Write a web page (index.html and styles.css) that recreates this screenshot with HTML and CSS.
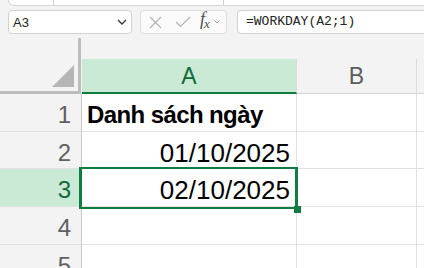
FILE: index.html
```html
<!DOCTYPE html>
<html>
  <head>
    <title>Excel - WORKDAY</title>
    <link rel="stylesheet" href="styles.css">
  </head>
  <body>
    <div class="ribbon">
      <span class="ribbon-sep sep-one"></span>
      <span class="ribbon-sep sep-two"></span>
    </div>

    <div class="formula-row">
      <div class="name-box">
        <span class="name-text">A3</span>
        <svg class="chevron" width="10" height="6" viewBox="0 0 10 6">
          <path d="M1 1 L5 5 L9 1" fill="none" stroke="#333" stroke-width="1.3"/>
        </svg>
      </div>
      <div class="fx-buttons">
        <svg class="btn-icon" width="13" height="13" viewBox="0 0 13 13">
          <path d="M1 1 L12 12 M12 1 L1 12" stroke="#b4b4b4" stroke-width="1.2"/>
        </svg>
        <svg class="btn-icon" width="16" height="12" viewBox="0 0 16 12">
          <path d="M1 6 L5.5 10.5 L15 1" fill="none" stroke="#b4b4b4" stroke-width="1.2"/>
        </svg>
        <span class="fx-label">f<sub>x</sub></span>
        <svg class="tiny-chevron" width="6" height="4" viewBox="0 0 6 4">
          <path d="M0.5 0.5 L3 3 L5.5 0.5" fill="none" stroke="#a0a0a0" stroke-width="1"/>
        </svg>
      </div>
      <div class="formula-bar">=WORKDAY(A2;1)</div>
    </div>

    <div class="sheet">
      <div class="corner"><span class="corner-tri"></span></div>
      <div class="col-head col-active">A</div>
      <div class="col-head">B</div>
      <div class="col-head col-rest"></div>

      <div class="row-head">1</div>
      <div class="cell cell-bold">Danh sách ngày</div>
      <div class="cell"></div>
      <div class="cell cell-rest"></div>

      <div class="row-head">2</div>
      <div class="cell cell-num">01/10/2025</div>
      <div class="cell"></div>
      <div class="cell cell-rest"></div>

      <div class="row-head row-active">3</div>
      <div class="cell cell-num">02/10/2025</div>
      <div class="cell"></div>
      <div class="cell cell-rest"></div>

      <div class="row-head">4</div>
      <div class="cell"></div>
      <div class="cell"></div>
      <div class="cell cell-rest"></div>

      <div class="row-head">5</div>
      <div class="cell"></div>
      <div class="cell"></div>
      <div class="cell cell-rest"></div>

      <div class="selection"></div>
      <div class="fill-handle"></div>
    </div>
  </body>
</html>
```

FILE: styles.css
```css
body {
  margin: 0;
  background-color: #f3f3f3;
  font-family: "Liberation Sans", Arial, sans-serif;
  overflow: hidden;
  height: 268px;
}
.ribbon {
  height: 5px;
  margin-left: 8px;
  background-color: #fff;
  border: 1px solid #d6d6d6;
  border-top: none;
  border-bottom-left-radius: 8px;
  position: relative;
  margin-right: -10px;
}
.ribbon-sep {
  position: absolute;
  top: 0;
  width: 1px;
  height: 5px;
  background-color: #d0d0d0;
}
.sep-one {
  left: 44px;
}
.sep-two {
  left: 214px;
}
.formula-row {
  display: flex;
  margin-top: 4px;
  height: 24px;
  margin-right: -10px;
}
.name-box {
  box-sizing: border-box;
  width: 124px;
  margin-left: 8px;
  background-color: #fff;
  border: 1px solid #d1d1d1;
  border-radius: 4px;
  display: flex;
  align-items: center;
  justify-content: space-between;
  padding: 0 4px 0 4px;
}
.name-text {
  font-size: 13px;
  color: #222;
}
.fx-buttons {
  box-sizing: border-box;
  width: 87px;
  margin-left: 8px;
  background-color: #fafafa;
  border: 1px solid #dedede;
  border-radius: 4px;
  display: flex;
  align-items: center;
  padding-left: 8px;
}
.btn-icon {
  margin-right: 13px;
}
.btn-icon + .btn-icon {
  margin-right: 9px;
}
.fx-label {
  font-family: "Liberation Serif", serif;
  font-style: italic;
  font-size: 18px;
  color: #505050;
  line-height: 16px;
  margin-top: -2px;
}
.fx-label sub {
  font-size: 13px;
  vertical-align: -3px;
  margin-left: -1px;
}
.tiny-chevron {
  margin-left: 4px;
}
.formula-bar {
  flex: 1;
  margin-left: 10px;
  box-sizing: border-box;
  background-color: #fff;
  border: 1px solid #d1d1d1;
  border-radius: 4px;
  font-family: "Liberation Mono", monospace;
  font-size: 13px;
  color: #222;
  line-height: 22px;
  padding-left: 8px;
}
.sheet {
  margin-top: 4px;
  display: grid;
  grid-template-columns: 82px 215px 120px 1fr;
  grid-template-rows: 56px 38px 37px 38px 38px 38px;
  position: relative;
}
.corner {
  box-sizing: border-box;
  width: 81px;
  height: 56px;
  border-right: 3px solid #bdbdbd;
  border-bottom: 3px solid #bdbdbd;
  position: relative;
}
.corner-tri {
  position: absolute;
  right: 4px;
  bottom: 4px;
  width: 0;
  height: 0;
  border-left: 22px solid transparent;
  border-bottom: 22px solid #b6b6b6;
}
.col-head {
  align-self: end;
  box-sizing: border-box;
  height: 35px;
  border-right: 1px solid #dcdcdc;
  border-bottom: 1px solid #d4d4d4;
  text-align: center;
  font-size: 23px;
  color: #5c5c5c;
  padding-top: 2px;
  line-height: 31px;
}
.col-active {
  background-color: #caead6;
  color: #0f6a3a;
  border-bottom: 2px solid #107c41;
}
.col-rest {
  border-right: none;
}
.row-head {
  box-sizing: border-box;
  border-right: 1px solid #c8c8c8;
  border-bottom: 1px solid #e1e1e1;
  text-align: right;
  padding-right: 10px;
  font-size: 24px;
  color: #616161;
  padding-top: 4px;
  line-height: 34px;
}
.row-active {
  background-color: #caead6;
  color: #0f6a3a;
  border-right: 2px solid #107c41;
  padding-right: 9px;
}
.cell {
  box-sizing: border-box;
  background-color: #fff;
  border-right: 1px solid #e1e1e1;
  border-bottom: 1px solid #e1e1e1;
  color: #000;
  padding-top: 4px;
  line-height: 34px;
  white-space: nowrap;
}
.cell-rest {
  border-right: none;
}
.cell-bold {
  font-weight: bold;
  font-size: 24px;
  letter-spacing: -0.6px;
  padding-left: 5px;
}
.cell-num {
  font-size: 26px;
  text-align: right;
  padding-right: 6px;
}
.selection {
  position: absolute;
  left: 79px;
  top: 129px;
  width: 219px;
  height: 42px;
  box-sizing: border-box;
  border: 2px solid #107c41;
  border-right-width: 3px;
}
.fill-handle {
  position: absolute;
  left: 294px;
  top: 168px;
  width: 7px;
  height: 7px;
  background-color: #107c41;
}
```
